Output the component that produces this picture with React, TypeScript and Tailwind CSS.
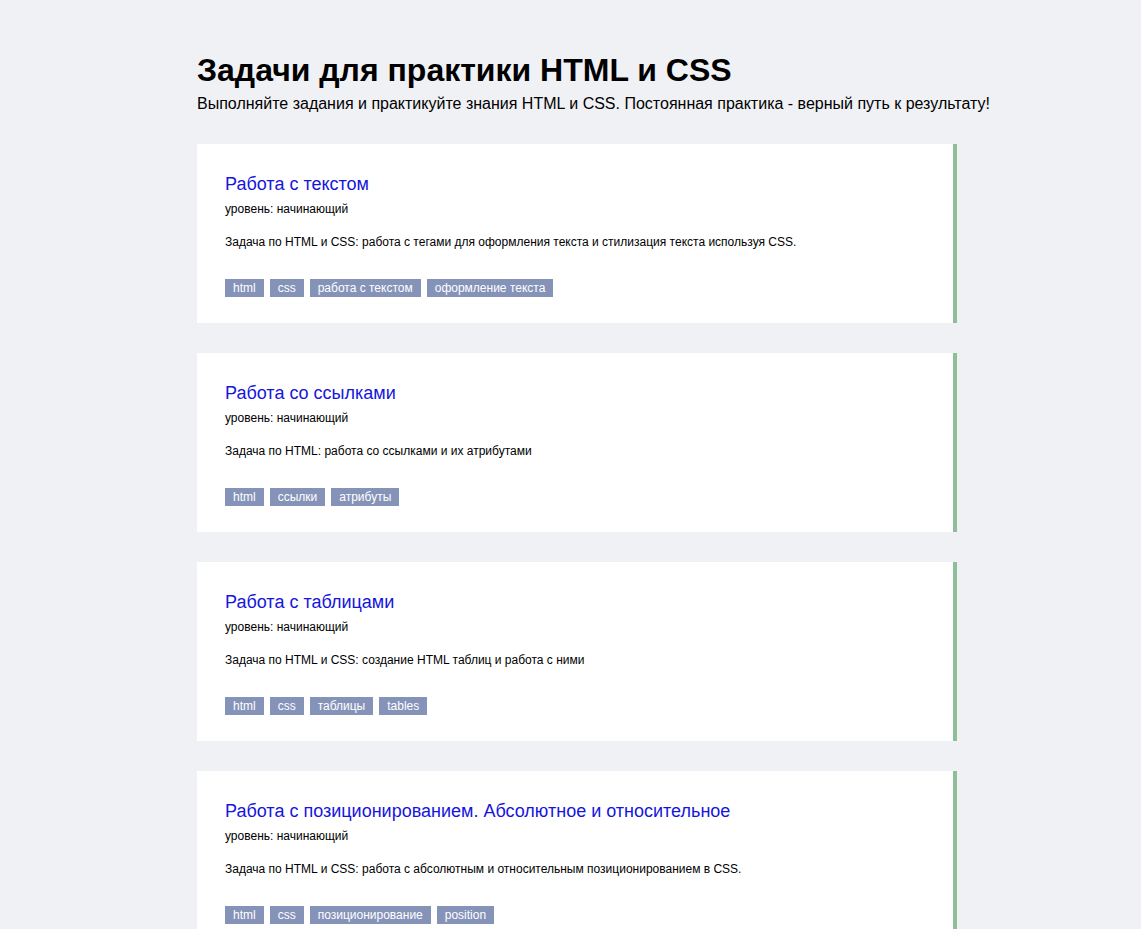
const tasks = [
  {
    title: 'Работа с текстом',
    desc: 'Задача по HTML и CSS: работа с тегами для оформления текста и стилизация текста используя CSS.',
    tags: ['html', 'css', 'работа с текстом', 'оформление текста'],
  },
  {
    title: 'Работа со ссылками',
    desc: 'Задача по HTML: работа со ссылками и их атрибутами',
    tags: ['html', 'ссылки', 'атрибуты'],
  },
  {
    title: 'Работа с таблицами',
    desc: 'Задача по HTML и CSS: создание HTML таблиц и работа с ними',
    tags: ['html', 'css', 'таблицы', 'tables'],
  },
  {
    title: 'Работа с позиционированием. Абсолютное и относительное',
    desc: 'Задача по HTML и CSS: работа с абсолютным и относительным позиционированием в CSS.',
    tags: ['html', 'css', 'позиционирование', 'position'],
  },
];

function App() {
  return (
    <div className="min-h-[929px] bg-[#f0f1f5] font-['Liberation_Sans',Arial,sans-serif] text-black">
      <div className="pl-[197px] pt-[52px] pb-10">
        <h1 className="text-[32px] leading-[37px] font-bold">Задачи для практики HTML и CSS</h1>
        <p className="text-[16px] leading-[18px] mt-[6px]">
          Выполняйте задания и практикуйте знания HTML и CSS. Постоянная практика - верный путь к результату!
        </p>

        <div className="mt-[31px] flex flex-col gap-[30px] w-[760px]">
          {tasks.map((t) => (
            <div key={t.title} className="bg-white border-r-4 border-[#8fbf98] pl-[28px] pr-6 pt-[29px] pb-[26px]">
              <a href="#" className="block text-[18px] leading-[22px] text-[#1515de]">
                {t.title}
              </a>
              <div className="text-[12px] leading-[14px] mt-[7px]">уровень: начинающий</div>
              <div className="text-[12px] leading-[14px] mt-[19px]">{t.desc}</div>
              <div className="flex gap-[6px] mt-[30px]">
                {t.tags.map((tag) => (
                  <span key={tag} className="bg-[#8593b9] text-white text-[12px] leading-[18px] px-[8px]">
                    {tag}
                  </span>
                ))}
              </div>
            </div>
          ))}
        </div>
      </div>
    </div>
  );
}

export default App;
